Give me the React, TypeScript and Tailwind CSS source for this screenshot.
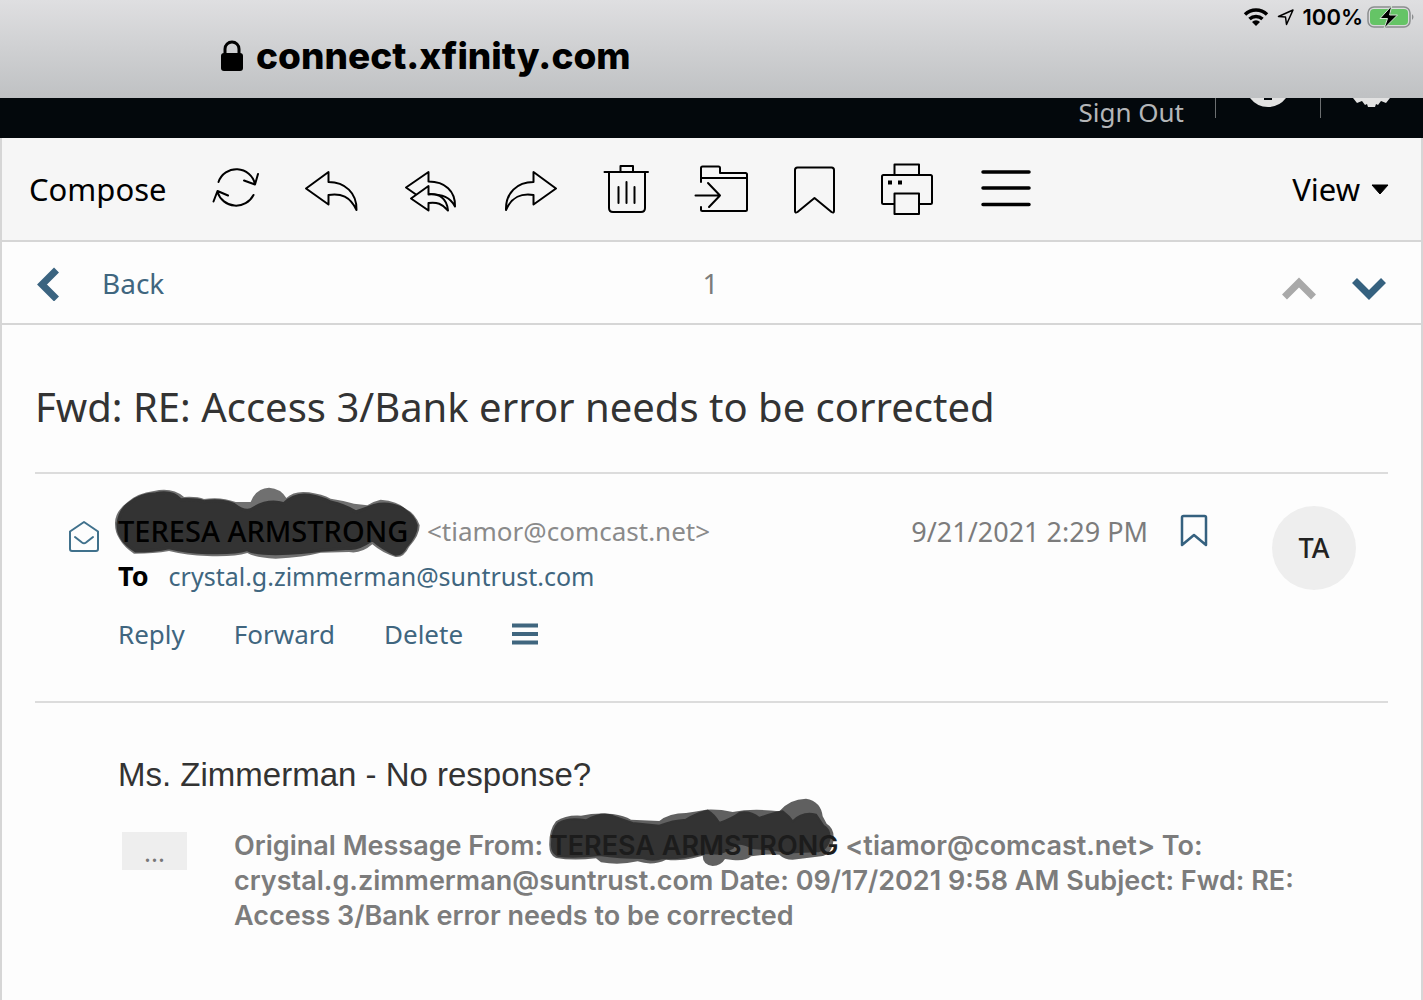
import type { ReactNode } from "react";

const NAME = "TERESA ARMSTRONG";

function Icon({
  w,
  h,
  children,
  className = "",
}: {
  w: number;
  h: number;
  children: ReactNode;
  className?: string;
}) {
  return (
    <svg
      width={w}
      height={h}
      viewBox={`0 0 ${w} ${h}`}
      fill="none"
      stroke="currentColor"
      strokeWidth="2"
      strokeLinejoin="round"
      strokeLinecap="round"
      className={`shrink-0 ${className}`}
      aria-hidden="true"
    >
      {children}
    </svg>
  );
}

const tools = [
  {
    label: "Refresh",
    icon: (
      <Icon w={48} h={52}>
        <path d="M6.500 19A19 19 0 0 1 43 21M32 17.500l11 4 3-10.500M41.500 32A19.500 19.500 0 0 1 5.500 29M1.500 38.500l4-10.500 10.500 4.500" />
      </Icon>
    ),
  },
  {
    label: "Reply",
    icon: (
      <Icon w={56} h={52}>
        <path d="M2 25.500L24.500 9v10C41 19 53 30 52.500 47 46 33.500 37 30 24.500 32v9.500z" />
      </Icon>
    ),
  },
  {
    label: "Reply all",
    icon: (
      <Icon w={56} h={52}>
        <path d="M12 31.500L2 24.500 24.500 9v9.500C41 18.500 51.500 28 51 43.500 46 34 39 31.500 24.500 31" />
        <path
          d="M7 35.500L24.500 23v8.500C35 30.500 43 35 44 47.500 38 40.500 33 39 24.500 40v7.500z"
          fill="#f6f6f6"
        />
      </Icon>
    ),
  },
  {
    label: "Forward",
    icon: (
      <Icon w={55} h={52}>
        <path d="M52 25.500L29.500 9v10C13 19 1.500 30 2 47 8 33.500 17 30 29.500 32v9.500z" />
      </Icon>
    ),
  },
  {
    label: "Delete",
    icon: (
      <Icon w={47} h={52}>
        <path d="M1.500 9H45M17.500 9V3H30v6M6 9v36q0 4 4 4h28q4 0 4-4V9M15.500 24v16M23.500 19v21M31.500 24v16" />
      </Icon>
    ),
  },
  {
    label: "Move",
    icon: (
      <Icon w={55} h={52}>
        <path d="M7 19V5q0-1.500 1.500-1.500h16Q26 3.500 26 5v5h25.500q1.500 0 1.500 1.500v35q0 1.500-1.500 1.500H8.500Q7 48 7 46.500V44M7 15h46M1.500 32.500H26M14 20l12 12.500L15 44" />
      </Icon>
    ),
  },
  {
    label: "Flag",
    icon: (
      <Icon w={43} h={52}>
        <path d="M2 7q0-2.500 2.500-2.500h34Q41 4.500 41 7v41q0 2.500-2.500 1L21.500 35 4.500 49Q2 50.500 2 48z" />
      </Icon>
    ),
  },
  {
    label: "Print",
    icon: (
      <Icon w={55} h={54}>
        <path d="M14.500 13V2.500H39V13M14.500 42H3.500Q2 42 2 40.500v-26Q2 13 3.500 13h47q1.500 0 1.500 1.500v26q0 1.500-1.500 1.500H39M14.500 31.500H39V52H14.500z" />
        <path d="M8 18.500h4v4H8zM18 18.500h4v4h-4z" fill="#000" stroke="none" />
      </Icon>
    ),
  },
  {
    label: "More",
    icon: (
      <Icon w={54} h={52}>
        <path d="M4 9h46M4 25h46M4 41.500h46" strokeWidth="3.5" />
      </Icon>
    ),
  },
];

function StatusBar() {
  return (
    <header className="flex h-[98px] flex-col bg-linear-to-b from-[#dfdfe1] to-[#bfc1c3] font-['Inter',sans-serif] text-black">
      <div className="flex h-[34px] items-center justify-end gap-2 pr-2">
        <Icon w={26} h={20}>
          <path d="M2 7.500a16 16 0 0 1 22 0M6.500 12a9.500 9.500 0 0 1 13 0" strokeWidth="3.5" strokeLinecap="butt" />
          <path d="M13 19l-4-4a5.500 5.500 0 0 1 8 0z" fill="currentColor" stroke="none" />
        </Icon>
        <Icon w={18} h={18}>
          <path d="M1.500 8.500L16 2 9.500 16.500 8.500 9z" strokeWidth="1.5" />
        </Icon>
        <span className="text-[22px] leading-6 font-semibold">100%</span>
        <Icon w={48} h={24} className="-ml-1">
          <rect x="1" y="2" width="42" height="20" rx="6" stroke="#8b8d8e" strokeWidth="1.5" />
          <rect x="3" y="4" width="38" height="16" rx="4" fill="#65c466" stroke="none" />
          <path d="M45 9q3 3 0 6z" fill="#8b8d8e" stroke="none" />
          <path d="M24.500 1L13 13.500h7.500L17 23.500 30.500 10H23z" fill="#000" stroke="#d5e8d6" strokeWidth="1" />
        </Icon>
      </div>
      <div className="flex items-center gap-3 pl-[220px]">
        <svg width="24" height="32" viewBox="0 0 24 32" aria-hidden="true">
          <rect x="1" y="13" width="22" height="18" rx="3" />
          <path d="M5 14V9a7 7 0 0 1 14 0v5" fill="none" stroke="#000" strokeWidth="3" />
        </svg>
        <span className="text-[37px] leading-[44px] font-extrabold">connect.xfinity.com</span>
      </div>
    </header>
  );
}

function AccountBar() {
  return (
    <div className="flex h-10 items-start justify-end bg-[#03080c] pr-[30px] text-[#e2e2e2]">
      <a href="#signout" className="text-[26px] leading-7 text-[#b4b6b8]">
        Sign Out
      </a>
      <span className="ml-[31px] h-5 w-px bg-[#6c6f71]" />
      <svg width="44" height="12" viewBox="0 0 44 12" className="mx-[30px]" aria-hidden="true">
        <path d="M4 0h36Q33 9 22 9T4 0z" fill="currentColor" />
        <path d="M18 0h8v2h-8z" fill="#03080c" />
      </svg>
      <span className="h-5 w-px bg-[#6c6f71]" />
      <svg width="44" height="12" viewBox="0 0 44 12" className="ml-7" aria-hidden="true">
        <path d="M4 0h37l-4 5-5-2-3 4-2-1-1 3h-7l-1-3-2 1-3-4-5 2z" fill="currentColor" />
      </svg>
    </div>
  );
}

function Toolbar() {
  return (
    <nav className="flex items-center border-b-2 border-[#d6d6d6] bg-[#f6f6f6] py-6 pr-8 pl-[27px] text-black">
      <button className="mr-[45px] text-[31px] leading-[52px]">Compose</button>
      <div className="flex items-center gap-11">
        {tools.map((tool) => (
          <button key={tool.label} aria-label={tool.label}>
            {tool.icon}
          </button>
        ))}
      </div>
      <button className="ml-auto flex items-center gap-[11px] text-[31px] leading-[52px]">
        View
        <svg width="18" height="11" viewBox="0 0 18 11" aria-hidden="true">
          <path d="M1 1h16L9 10z" stroke="#000" strokeLinejoin="round" />
        </svg>
      </button>
    </nav>
  );
}

function Pager() {
  return (
    <div className="grid grid-cols-3 items-center border-b-2 border-[#d6d6d6] pt-[18px] pr-[35px] pb-[17px] pl-[33px] text-[28px] leading-[46px]">
      <a href="#inbox" className="flex items-center gap-[41px] text-[#40667f]">
        <svg width="26" height="36" viewBox="0 0 26 36" fill="none" aria-hidden="true">
          <path d="M21.500 5L7 19.500 21.500 34" stroke="#3b6480" strokeWidth="7" />
        </svg>
        Back
      </a>
      <span className="text-center text-[#7c7c7c]">1</span>
      <div className="flex justify-end gap-9 pt-3">
        <button aria-label="Previous message">
          <svg width="34" height="24" viewBox="0 0 34 24" fill="none" aria-hidden="true">
            <path d="M2.500 20L17 5.500 31.500 20" stroke="#a9a9a9" strokeWidth="7" />
          </svg>
        </button>
        <button aria-label="Next message">
          <svg width="34" height="24" viewBox="0 0 34 24" fill="none" aria-hidden="true">
            <path d="M2.500 3.500L17 18 31.500 3.500" stroke="#35617f" strokeWidth="7" />
          </svg>
        </button>
      </div>
    </div>
  );
}

function HeaderScribble() {
  return (
    <svg
      width="307"
      height="74"
      viewBox="280 47 921 222"
      className="absolute -top-5 -left-1"
      aria-hidden="true"
    >
      <path
        d="M283 160Q282 125 320 96 350 68 400 62 455 50 490 80 530 78 550 86 600 78 645 95L690 95Q705 55 745 52 780 54 797 83 820 60 865 66 905 72 930 85 965 90 1000 100L1040 105Q1060 92 1080 88 1130 92 1155 115 1185 130 1197 165 1197 195 1165 230 1150 262 1125 260 1085 248 1055 222 1020 252 985 245L900 247Q850 260 765 265 700 262 680 248 640 260 560 257 500 255 445 242 400 250 340 250 310 230 296 205 283 185 283 160z"
        fill="#333"
        fillOpacity="0.7"
      />
      <path
        d="M292 160Q298 115 330 96 360 72 405 70 455 60 480 88 530 86 550 94 600 86 640 102 670 125 690 118 740 85 790 100 820 70 865 75 905 82 930 95 975 105 1005 125L1060 105Q1100 94 1140 112 1180 135 1187 165 1187 195 1155 230 1145 252 1125 252 1085 235 1055 208 1010 238 985 234L900 240Q850 248 765 250 700 250 680 238 640 250 560 247 500 245 445 232 400 242 345 242 290 210 292 160z"
        fill="#333"
        stroke="#333"
        strokeWidth="9"
      />
    </svg>
  );
}

function QuoteScribble() {
  return (
    <svg
      width="288"
      height="70"
      viewBox="86 52 864 210"
      className="absolute -top-[31px] -left-0.5"
      aria-hidden="true"
    >
      <path
        d="M90 190Q90 150 110 125 140 105 185 108 230 98 280 103 315 108 335 120L420 124Q450 100 500 100 530 95 560 90 600 88 640 97 700 85 780 95 810 58 860 57 905 65 910 110L922 132Q944 145 943 175 940 225 905 230L820 240Q795 240 780 225 740 222 695 230 680 245 640 241L617 238Q605 258 580 259 550 255 550 228L520 236Q480 245 440 240 400 260 355 245 300 258 245 248L230 236Q160 244 110 235 88 225 90 190z"
        fill="#333"
        fillOpacity="0.78"
      />
      <path
        d="M98 190Q98 150 118 130 150 112 200 122 240 100 270 106 310 120 340 130L420 138Q460 122 500 120 530 100 565 93 585 105 600 130 640 115 660 100 690 92 720 115 760 100 790 95 810 110 820 125 850 95 890 105L912 138Q934 150 930 180 920 215 890 215L820 218Q790 215 760 210L700 205Q650 180 640 205L600 222 550 220Q480 240 430 235 400 245 370 235 300 235 240 226 160 235 115 228 95 215 98 190z"
        fill="#333"
        stroke="#333"
        strokeWidth="6"
      />
    </svg>
  );
}

function MessageHeader() {
  return (
    <section className="flex items-start border-b-2 border-[#dcdcdc] pt-8 pb-12 pl-8 text-[27px]">
      <Icon w={34} h={34} className="mt-[13px] text-[#40718c]">
        <path d="M3 12.500L17 3l14 9.500V30q0 2-2 2H5q-2 0-2-2zM8 18l7 5.500q2 1.500 4 0L26 18" />
      </Icon>
      <div className="ml-[17px] flex grow flex-col">
        <div className="flex leading-[50px]">
          <span className="relative mr-2 w-[301px] whitespace-nowrap">
            <HeaderScribble />
            <span className="relative text-[29px] font-medium text-black">{NAME}</span>
          </span>
          <span className="text-[26px] text-[#8a8a8a]">&lt;tiamor@comcast.net&gt;</span>
        </div>
        <div className="flex gap-5 leading-[38px]">
          <b className="font-bold text-black">To</b>
          <a href="mailto:crystal.g.zimmerman@suntrust.com" className="text-[25px] text-[#40667f]">
            crystal.g.zimmerman@suntrust.com
          </a>
        </div>
        <div className="mt-5 flex items-center gap-[49px] text-[26px] leading-[38px] text-[#40667f]">
          <button>Reply</button>
          <button>Forward</button>
          <button>Delete</button>
          <button aria-label="More actions">
            <Icon w={26} h={24}>
              <path d="M0 3.500h26M0 12h26M0 20.500h26" strokeWidth="4" strokeLinecap="butt" />
            </Icon>
          </button>
        </div>
      </div>
      <time className="leading-[52px] text-[#7c7c7c]">9/21/2021 2:29 PM</time>
      <button aria-label="Flag message" className="mt-2 ml-8 text-[#35617f]">
        <Icon w={28} h={34}>
          <path d="M2 3.500Q2 2 3.500 2h21Q26 2 26 3.500v27.500L14 21 2 31z" strokeWidth="2.500" />
        </Icon>
      </button>
      <span className="mr-8 ml-16 flex size-[84px] items-center justify-center rounded-full bg-[#eeeeee] font-medium text-[#222]">
        TA
      </span>
    </section>
  );
}

function MessageBody() {
  return (
    <section className="pt-[46px] pl-[83px]">
      <p className="font-['Liberation_Sans',Arial,sans-serif] text-[33px] leading-[52px] text-[#333]">
        Ms. Zimmerman - No response?
      </p>
      <div className="mt-[27px] flex items-start gap-[47px] pl-1">
        <button
          aria-label="Show trimmed content"
          className="mt-1 h-[38px] w-[65px] shrink-0 bg-[#eeeeee] text-[26px] leading-10 text-[#777]"
        >
          ...
        </button>
        <p className="font-['Inter',sans-serif] text-[27px] leading-[35px] font-semibold text-[#7c7c7c]">
          Original Message From:{" "}
          <span className="relative inline-block">
            <QuoteScribble />
            <span className="relative text-[#1c1c1c]">{NAME}</span>
          </span>{" "}
          &lt;tiamor@comcast.net&gt; To:
          <br />
          crystal.g.zimmerman@suntrust.com Date: 09/17/2021 9:58 AM Subject: Fwd: RE:
          <br />
          Access 3/Bank error needs to be corrected
        </p>
      </div>
    </section>
  );
}

export default function App() {
  return (
    <div className="min-h-screen bg-[#fdfdfd] font-['Noto_Sans',sans-serif]">
      <StatusBar />
      <AccountBar />
      <main className="min-h-[862px] border-x-2 border-[#d6d6d6]">
        <Toolbar />
        <Pager />
        <article className="px-[33px]">
          <h1 className="border-b-2 border-[#dcdcdc] pt-[56px] pb-[39px] text-[40px] leading-[52px] text-[#333]">
            Fwd: RE: Access 3/Bank error needs to be corrected
          </h1>
          <MessageHeader />
          <MessageBody />
        </article>
      </main>
    </div>
  );
}
